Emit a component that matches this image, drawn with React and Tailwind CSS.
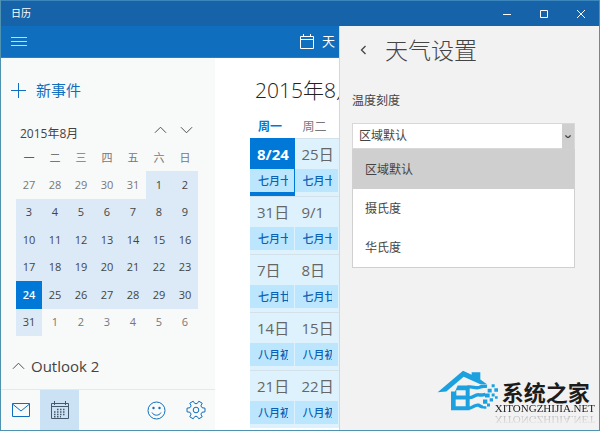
import React, { useState } from 'react';

const WEEKDAYS = ['一', '二', '三', '四', '五', '六', '日'];

// August 2015, including the days around it
const WEEKS = [
  [27, 28, 29, 30, 31, 1, 2],
  [3, 4, 5, 6, 7, 8, 9],
  [10, 11, 12, 13, 14, 15, 16],
  [17, 18, 19, 20, 21, 22, 23],
  [24, 25, 26, 27, 28, 29, 30],
  [31, 1, 2, 3, 4, 5, 6],
];

const AGENDA = [
  [['8/24', '七月十一'], ['25日', '七月十二']],
  [['31日', '七月十八'], ['9/1', '七月十九']],
  [['7日', '七月廿五'], ['8日', '七月廿六']],
  [['14日', '八月初二'], ['15日', '八月初三']],
  [['21日', '八月初九'], ['22日', '八月初十']],
];

const SCALES = ['区域默认', '摄氏度', '华氏度'];

const isOtherMonth = (week, day) => (week === 0 && day > 20) || (week === 5 && day < 20);

const Chevron = ({ d, className }) => (
  <svg viewBox="0 0 14 8" className={className} fill="none" stroke="currentColor">
    <path d={d} />
  </svg>
);

const UP = 'M1 7 L7 1 L13 7';
const DOWN = 'M1 1 L7 7 L13 1';

const TitleBar = () => (
  <header className="flex h-[26px] shrink-0 items-center justify-between bg-[#1763a9] border-t border-[#3a86bd] pl-[10px] text-white">
    <h1 className="text-[10px]">日历</h1>
    <div className="flex">
      <button aria-label="最小化" className="flex w-[37px] justify-center">
        <svg className="size-[10px]" viewBox="0 0 10 10" stroke="currentColor"><path d="M1 5.5h8" /></svg>
      </button>
      <button aria-label="最大化" className="flex w-[37px] justify-center">
        <svg className="size-[10px]" viewBox="0 0 10 10" fill="none" stroke="currentColor"><path d="M1.5 1.5h7v7h-7z" /></svg>
      </button>
      <button aria-label="关闭" className="flex w-[37px] justify-center">
        <svg className="size-[10px]" viewBox="0 0 10 10" stroke="currentColor"><path d="M1 1l8 8M9 1l-8 8" /></svg>
      </button>
    </div>
  </header>
);

const AppBar = () => (
  <div className="flex h-8 shrink-0 items-center justify-between border-b border-[#2f7dbb] bg-[#106ebe] pl-[10px] pr-1 text-white">
    <button aria-label="菜单">
      <svg className="h-3 w-4" viewBox="0 0 16 12" stroke="#c5dcf0"><path d="M0 1.5h16M0 5.5h16M0 9.5h16" /></svg>
    </button>
    <button className="flex items-center gap-[7px] text-[13px]">
      <svg className="size-4" viewBox="0 0 16 16" fill="none" stroke="currentColor">
        <path d="M1.5 2.5h13v12h-13zM1.5 5.5h13M4.5 0v2.5M11.5 0v2.5" />
      </svg>
      天
    </button>
  </div>
);

const MonthPicker = () => (
  <section className="px-[15px]">
    <div className="flex items-center justify-between pl-1 pr-[7px] text-[#444]">
      <h2 className="text-xs leading-6">2015年8月</h2>
      <div className="flex gap-[13px] pb-2">
        <button aria-label="上个月"><Chevron d={UP} className="h-2 w-[13px]" /></button>
        <button aria-label="下个月"><Chevron d={DOWN} className="h-2 w-[13px]" /></button>
      </div>
    </div>
    <table className="w-[182px] table-fixed border-collapse text-center text-[11px]">
      <thead>
        <tr className="h-[25px]">
          {WEEKDAYS.map((name, i) => (
            <th key={name} className={`p-0 font-normal ${i === 0 ? 'text-[#0078d7]' : 'text-[#777]'}`}>{name}</th>
          ))}
        </tr>
      </thead>
      <tbody>
        {WEEKS.map((week, w) => (
          <tr key={w} className="group">
            {week.map((day, i) => {
              const other = isOtherMonth(w, day);
              const today = w === 4 && i === 0;
              return (
                <td key={i} className="p-0">
                  <button
                    className={`block h-7 w-full group-even:h-[27px] ${
                      today ? 'bg-[#0078d7] font-semibold text-white' : other ? 'text-[#777]' : 'bg-[#dbeaf6] font-medium text-[#444]'
                    }`}
                  >
                    {day}
                  </button>
                </td>
              );
            })}
          </tr>
        ))}
      </tbody>
    </table>
  </section>
);

const BottomNav = () => (
  <nav className="mt-auto flex h-[41px] items-stretch border-t border-[#e6e9ec] text-[#106ebe]">
    <button aria-label="邮件" className="flex w-[39px] items-center justify-center">
      <svg className="h-[14px] w-5" viewBox="0 0 20 14" fill="none" stroke="currentColor">
        <path d="M1.5 .5h17v13h-17zM1.5 1l8.5 7 8.5-7" />
      </svg>
    </button>
    <button aria-label="日历" className="flex w-[39px] items-center justify-center bg-[#cbe1f4] text-[#45596b]">
      <svg className="h-[19px] w-5" viewBox="0 0 20 19" fill="none" stroke="currentColor">
        <path d="M1.5 2.5h17v15h-17zM1.5 5.5h17M4.5 0v4M15.5 0v4" />
        <path d="M7 8.5h9M4 11h12M4 13.5h12M4 15.8h7" strokeWidth="1.4" strokeDasharray="1.5 1.5" />
      </svg>
    </button>
    <button aria-label="反馈" className="ml-auto flex w-[39px] items-center justify-center">
      <svg className="size-[19px]" viewBox="0 0 19 19" fill="none" stroke="currentColor">
        <circle cx="9.5" cy="9.5" r="8.5" />
        <path d="M5 11.5c1.8 3.6 7.2 3.6 9 0" />
        <circle cx="6.5" cy="7" r="1.2" fill="currentColor" stroke="none" />
        <circle cx="12.5" cy="7" r="1.2" fill="currentColor" stroke="none" />
      </svg>
    </button>
    <button aria-label="设置" className="flex w-[39px] items-center justify-center">
      <svg className="size-5" viewBox="-10 -10 20 20" fill="none" stroke="currentColor" strokeLinejoin="round">
        <path d="M9-1.8v3.6L6 2.3 4.9 4.1 6.2 6.8 2.8 8.8 1.1 6.4h-2.2L-2.8 8.8-6.2 6.8-4.9 4.1-6 2.3-9 1.8v-3.6L-6-2.3-4.9-4.1-6.2-6.8-2.8-8.8-1.1-6.4h2.2L2.8-8.8 6.2-6.8 4.9-4.1 6-2.3z" />
        <circle r="2.8" />
      </svg>
    </button>
  </nav>
);

const Sidebar = () => (
  <aside className="flex w-[214px] shrink-0 flex-col bg-[#f8f9f9]">
    <button className="mt-5 mb-5 flex items-center gap-[10px] pl-[10px] text-[15px] leading-6 text-[#106ebe]">
      <svg className="size-[15px]" viewBox="0 0 15 15" stroke="currentColor"><path d="M7.5 0v15M0 7.5h15" /></svg>
      新事件
    </button>
    <MonthPicker />
    <button className="mt-[18px] flex items-center gap-[6px] pl-[11px] text-[15px] leading-6 text-[#444]">
      <Chevron d={UP} className="h-2 w-[13px]" />
      Outlook 2
    </button>
    <BottomNav />
  </aside>
);

const Agenda = () => (
  <main className="min-w-0 flex-1 overflow-hidden pl-[35px]">
    <h2 className="mt-4 h-8 overflow-hidden pl-[5px] text-[21px] leading-8 font-light whitespace-nowrap text-[#222]">2015年8月</h2>
    <table className="mt-[10px] w-full table-fixed border-collapse text-left">
      <thead>
        <tr className="h-[22px] text-xs text-[#777]">
          <th className="p-0 pl-2 font-bold text-[#0078d7]">周一</th>
          <th className="p-0 pl-2 font-normal">周二</th>
        </tr>
      </thead>
      <tbody>
        {AGENDA.map((row, r) => (
          <tr key={r}>
            {row.map(([date, lunar], c) => {
              const today = r === 0 && c === 0;
              return (
                <td key={date} className="p-0">
                  <div
                    className={`flex h-[58px] flex-col border-t ${
                      today ? 'border-[#0078d7] border-b-4 bg-[#0078d7]' : 'border-[#d3e2ea] bg-[#def2fd]'
                    }`}
                  >
                    <span className={`h-[30px] pl-[7px] text-[15px] leading-[30px] whitespace-nowrap ${today ? 'font-bold text-white' : 'text-[#666]'}`}>
                      {date}
                    </span>
                    <span className="mr-px h-[23px] bg-[#bce6fd] pr-[6px] pl-2 text-[11px] leading-[23px] font-medium text-[#0b62b4]">
                      <span className="block overflow-hidden whitespace-nowrap">{lunar}</span>
                    </span>
                  </div>
                </td>
              );
            })}
          </tr>
        ))}
      </tbody>
    </table>
  </main>
);

const Logo = () => (
  <div className="mt-auto mr-1 mb-4 flex items-start self-end">
    <svg className="-mr-1 h-[41px] w-[62px]" viewBox="4 16 186 122" fill="#1ba1e0">
      <path d="M6 82 82 18l26 12v-8h26v22l20 14h-20L84 36 32 80z" />
      <path fillRule="evenodd" d="M46 80h12l8-18h36v74H46zM62 76v16h28V76zM60 104v20h30v-20z" />
      <path
        d="M96 67c18-4 22 6 36 0 8-4 14-3 22-2M96 98c16 4 20-10 34-8 8 2 12-1 18-1M96 130c16 2 20-12 32-9 6 2 12 8 16 3"
        fill="none"
        stroke="#1ba1e0"
        strokeWidth="10"
      />
      <path d="M168 58h9v9h-9zM156 72h12v11h-12zM176 70h11v11h-11zM148 86h14v12h-14zM168 86h9v9h-9zM178 94h8v8h-8zM142 104h13v13h-13zM162 100h10v10h-10zM154 116h9v9h-9zM144 124h8v8h-8z" />
    </svg>
    <div className="pt-3 text-[#1c1c1c]">
      <p className="pl-[7px] text-[22px] leading-5 font-bold">系统之家</p>
      <p className="font-['Liberation_Serif',serif] text-[11px] leading-3 [-webkit-box-reflect:below_0px_linear-gradient(transparent,rgba(0,0,0,0.3))]">
        XITONGZHIJIA.NET
      </p>
    </div>
  </div>
);

const WeatherSettings = () => {
  const [scale, setScale] = useState(SCALES[0]);

  return (
    <aside className="flex w-[260px] shrink-0 flex-col border-l border-[#d5d8da] bg-[#f2f2f2] text-[#444]">
      <div className="mt-2 flex items-center gap-[18px] pl-5">
        <button aria-label="返回">
          <svg className="h-[10px] w-[7px]" viewBox="0 0 7 10" fill="none" stroke="currentColor" strokeWidth="1.3"><path d="M5.5 1l-4 4 4 4" /></svg>
        </button>
        <h2 className="text-[23px] leading-8 font-light">天气设置</h2>
      </div>
      <label htmlFor="scale" className="mt-[26px] pl-3 text-xs leading-[18px]">温度刻度</label>
      <div className="relative mt-[13px] mr-6 ml-3">
        <select
          id="scale"
          value={scale}
          onChange={(e) => setScale(e.target.value)}
          className="block h-[26px] w-full appearance-none border border-[#d8d8d8] bg-white pl-[6px] text-xs"
        >
          {SCALES.map((s) => <option key={s}>{s}</option>)}
        </select>
        <span className="pointer-events-none absolute top-px right-px bottom-0 flex w-3 items-center justify-center bg-[#cfcfcf]">
          <Chevron d={DOWN} className="w-[6px] stroke-3" />
        </span>
        <ul className="absolute top-full right-0 left-0 border border-[#d0d0d0] bg-white text-xs">
          {SCALES.map((s) => (
            <li key={s}>
              <button
                onClick={() => setScale(s)}
                className={`block h-[39px] w-full pl-3 text-left ${s === scale ? 'bg-[#cfcfcf]' : ''}`}
              >
                {s}
              </button>
            </li>
          ))}
        </ul>
      </div>
      <Logo />
    </aside>
  );
};

export default function App() {
  return (
    <div className="flex min-h-screen flex-col border-x border-b border-[#4f93b0] bg-white font-['Open_Sans','Noto_Sans_CJK_SC',sans-serif]">
      <TitleBar />
      <div className="flex flex-1">
        <div className="flex min-w-0 flex-1 flex-col">
          <AppBar />
          <div className="flex flex-1">
            <Sidebar />
            <Agenda />
          </div>
        </div>
        <WeatherSettings />
      </div>
    </div>
  );
}
